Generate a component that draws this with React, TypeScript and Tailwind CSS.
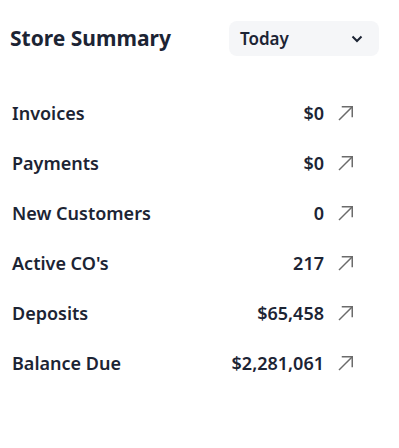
function Arrow() {
    return (
        <svg width="16" height="16" viewBox="0 0 16 16" fill="none" stroke="#6b6b6b" strokeWidth="1.5" strokeLinecap="square">
            <path d="M1.5 14.5 L14 2" />
            <path d="M4.5 1.75 H14.25 V11.5" />
        </svg>
    )
}

const rows = [
    { label: "Invoices", value: "$0" },
    { label: "Payments", value: "$0" },
    { label: "New Customers", value: "0" },
    { label: "Active CO's", value: "217" },
    { label: "Deposits", value: "$65,458" },
    { label: "Balance Due", value: "$2,281,061" },
]

function App() {
    return (
        <div className="w-[399px] h-[448px] bg-white text-[#1c2434]" style={{ fontFamily: '"Noto Sans", "Open Sans", sans-serif' }}>
            <div className="flex items-center justify-between pl-[10px] pr-[20px] pt-[21px]">
                <h2 className="text-[21px] font-bold">Store Summary</h2>
                <div className="flex items-center justify-between w-[150px] h-[35px] rounded-lg bg-[#f5f6f8] pl-[11px] pr-[16px]">
                    <span className="text-[17px] font-semibold">Today</span>
                    <svg width="12" height="8" viewBox="0 0 12 8" fill="none" stroke="#1c2434" strokeWidth="2">
                        <path d="M1.5 1.5 L6 6 L10.5 1.5" />
                    </svg>
                </div>
            </div>
            <div className="flex flex-col pl-[12px] pr-[45px] pt-[32px]">
                {rows.map((r) => (
                    <div key={r.label} className="flex items-center h-[50px]">
                        <span className="flex-1 text-[18px] font-semibold">{r.label}</span>
                        <span className="text-[18px] font-semibold">{r.value}</span>
                        <span className="ml-[14px]"><Arrow /></span>
                    </div>
                ))}
            </div>
        </div>
    )
}

export default App
